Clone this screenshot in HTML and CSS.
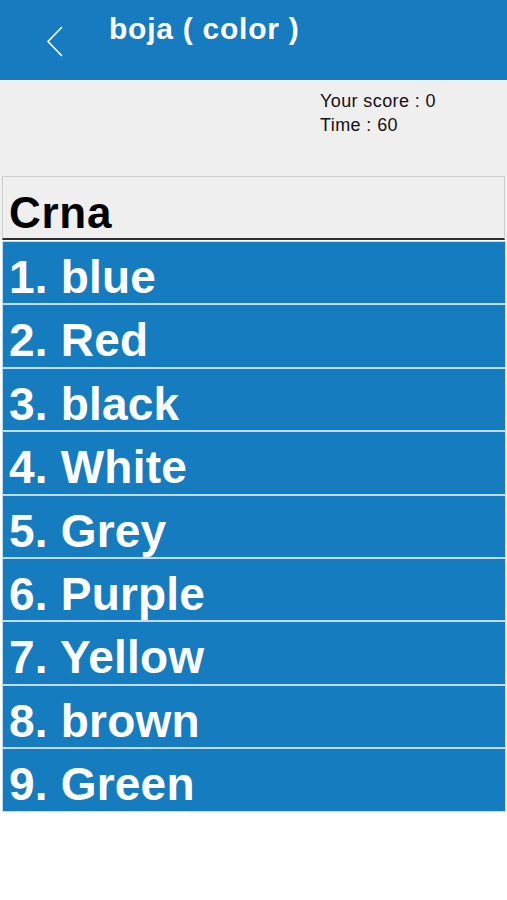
FILE: index.html
```html
<!DOCTYPE html>
<html>
<head>
<meta charset="utf-8">
<link rel="stylesheet" href="styles.css">
</head>
<body>
<header class="topbar">
  <svg class="back" width="20" height="34" viewBox="0 0 20 34"><polyline points="16,1 2,15.5 16,30" fill="none" stroke="#fff" stroke-width="1.6"/></svg>
  <h1 class="title">boja ( color )</h1>
</header>
<section class="panel">
  <div class="score">
    <div>Your score : 0</div>
    <div>Time : 60</div>
  </div>
  <div class="word">Crna</div>
</section>
<ul class="options">
  <li>1. blue</li>
  <li>2. Red</li>
  <li>3. black</li>
  <li>4. White</li>
  <li>5. Grey</li>
  <li>6. Purple</li>
  <li>7. Yellow</li>
  <li>8. brown</li>
  <li>9. Green</li>
</ul>
</body>
</html>
```
FILE: styles.css
```css
html, body { margin: 0; padding: 0; background: #fff; }
body { font-family: "Liberation Sans", Arial, sans-serif; }
.topbar {
  height: 80px;
  background: #167cbf;
  display: flex;
  align-items: flex-start;
}
.back { margin: 26px 0 0 46px; }
.title {
  margin: 12px 0 0 43px;
  color: #fff;
  font-size: 30px;
  line-height: 34px;
  font-weight: bold;
  letter-spacing: 0.75px;
}
.panel {
  background: #efefef;
  padding-top: 9px;
}
.score {
  margin-left: 320px;
  font-size: 18px;
  line-height: 24px;
  letter-spacing: 0.4px;
  color: #111;
  height: 87px;
}
.word {
  margin: 0 2px;
  border: 1px solid #cfcfcf;
  border-bottom: 2px solid #2e2e2e;
  height: 47px;
  padding: 14px 0 0 6px;
  font-size: 44px;
  line-height: 44px;
  font-weight: bold;
  letter-spacing: 0.7px;
  color: #000;
}
.options {
  list-style: none;
  margin: 1px 1px 0 2px;
  padding: 0;
}
.options li {
  background: #147cbf;
  border: 1px solid #c0dcf0;
  height: 49.4px;
  padding: 12px 0 0 6px;
  color: #fff;
  font-size: 46px;
  line-height: 46px;
  font-weight: bold;
  letter-spacing: 0.2px;
}
```
